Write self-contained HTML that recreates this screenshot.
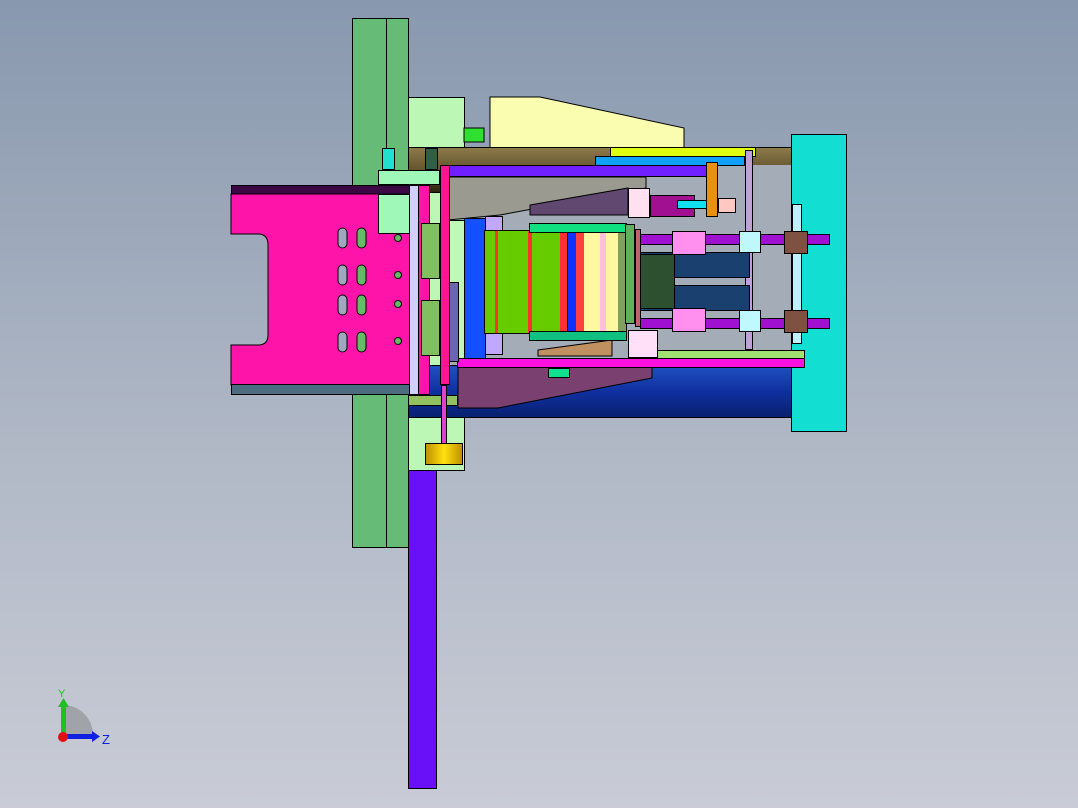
<!DOCTYPE html>
<html><head><style>
*{margin:0;padding:0;box-sizing:border-box}
body{width:1078px;height:808px;overflow:hidden;position:relative;background:linear-gradient(#8898ae,#b0b8c6 55%,#c9ccd6);font-family:"Liberation Sans",sans-serif}
.b{position:absolute;border:1px solid #000}
.n{position:absolute}
</style></head><body>
<!-- green plates -->
<div class="b" style="left:352px;top:18px;width:35px;height:530px;background:#66bb77"></div>
<div class="b" style="left:386px;top:18px;width:23px;height:530px;background:#66bb77"></div>
<!-- light green block -->
<div class="b" style="left:408px;top:97px;width:57px;height:374px;background:#bdf7b5"></div>
<!-- purple column -->
<div class="b" style="left:408px;top:470px;width:29px;height:319px;background:#6a10f8"></div>
<!-- pale yellow top shape -->
<svg class="n" style="left:0;top:0" width="1078" height="808">
<polygon points="490,97 540,97 684,128 684,158 490,158" fill="#fafcb0" stroke="#000"/>
<rect x="464" y="128" width="20" height="14" fill="#30e030" stroke="#000"/>
</svg>
<!-- olive rod -->
<div class="b" style="left:408px;top:147px;width:384px;height:46px;background:linear-gradient(#8c7a4a,#5c4c28 60%,#2c2410)"></div>
<!-- blue rod -->
<div class="b" style="left:408px;top:365px;width:384px;height:53px;background:linear-gradient(#2050c0,#1030a0 50%,#082070)"></div>
<!-- interior gray -->
<div class="n" style="left:440px;top:165px;width:352px;height:200px;background:#a4acb8"></div>
<!-- cyan block -->
<div class="b" style="left:791px;top:134px;width:56px;height:298px;background:#12dfd2"></div>
<div class="b" style="left:792px;top:204px;width:10px;height:140px;background:#c0f0ff"></div>
<!-- top bars -->
<div class="b" style="left:610px;top:147px;width:146px;height:10px;background:#e0ff10"></div>
<div class="b" style="left:595px;top:156px;width:150px;height:10px;background:#10a0f8"></div>
<div class="b" style="left:440px;top:165px;width:270px;height:12px;background:#7020ff"></div>
<div class="b" style="left:706px;top:162px;width:12px;height:55px;background:#e89010"></div>
<!-- gray trapezoid -->
<svg class="n" style="left:0;top:0" width="1078" height="808">
<polygon points="448,177 646,177 646,188 500,215 448,220" fill="#9a9a90" stroke="#000"/>
<polygon points="530,205 628,188 628,215 530,215" fill="#604870" stroke="#000"/>
<polygon points="458,367 652,367 652,378 498,408 458,408" fill="#7a4070" stroke="#000"/>
<polygon points="538,350 612,340 612,356 538,356" fill="#c09060" stroke="#000"/>
</svg>
<!-- left of interior -->
<div class="b" style="left:448px;top:220px;width:17px;height:140px;background:#c0f8b8"></div>
<div class="b" style="left:464px;top:218px;width:22px;height:142px;background:#1450ff"></div>
<div class="b" style="left:485px;top:216px;width:18px;height:22px;background:#c0a8ff"></div>
<div class="b" style="left:485px;top:333px;width:18px;height:22px;background:#c0a8ff"></div>
<!-- green block w/ stripes -->
<div class="b" style="left:484px;top:230px;width:84px;height:104px;background:linear-gradient(90deg,#66cc00 0 10px,#ff3030 10px 13px,#66cc00 13px 43px,#ff3030 43px 47px,#66cc00 47px 75px,#ff3030 75px 84px)"></div>
<div class="b" style="left:567px;top:230px;width:60px;height:104px;background:linear-gradient(90deg,#1030ff 0 8px,#ff4040 8px 16px,#fff8a0 16px 32px,#ffc0e0 32px 38px,#fff8a0 38px 50px,#80a060 50px 60px)"></div>
<div class="b" style="left:529px;top:223px;width:98px;height:10px;background:#10e080"></div>
<div class="b" style="left:529px;top:331px;width:98px;height:10px;background:#10c080"></div>
<div class="b" style="left:625px;top:224px;width:10px;height:100px;background:#60b060"></div>
<div class="b" style="left:635px;top:229px;width:6px;height:98px;background:#c06070"></div>
<!-- bottom bars -->
<div class="b" style="left:655px;top:350px;width:150px;height:9px;background:#a0e070"></div>
<div class="b" style="left:457px;top:358px;width:348px;height:10px;background:#ff10e0"></div>
<div class="b" style="left:548px;top:368px;width:22px;height:10px;background:#10e090"></div>
<!-- rods right -->
<div class="b" style="left:640px;top:234px;width:190px;height:11px;background:#a010d0"></div>
<div class="b" style="left:640px;top:318px;width:190px;height:11px;background:#a010d0"></div>
<div class="b" style="left:745px;top:150px;width:8px;height:200px;background:#c0a0d8"></div>
<div class="b" style="left:640px;top:252px;width:110px;height:26px;background:#1a4070"></div>
<div class="b" style="left:640px;top:285px;width:110px;height:26px;background:#1a4070"></div>
<div class="b" style="left:640px;top:254px;width:35px;height:55px;background:#2c5030"></div>
<div class="b" style="left:672px;top:231px;width:34px;height:24px;background:#ff90f0"></div>
<div class="b" style="left:672px;top:308px;width:34px;height:24px;background:#ff90f0"></div>
<div class="b" style="left:739px;top:231px;width:22px;height:22px;background:#c0f8ff"></div>
<div class="b" style="left:739px;top:310px;width:22px;height:22px;background:#c0f8ff"></div>
<div class="b" style="left:784px;top:231px;width:24px;height:23px;background:#805040"></div>
<div class="b" style="left:784px;top:310px;width:24px;height:23px;background:#805040"></div>
<div class="b" style="left:650px;top:195px;width:45px;height:22px;background:#a01090"></div>
<div class="b" style="left:677px;top:200px;width:30px;height:9px;background:#10e0f0"></div>
<div class="b" style="left:718px;top:198px;width:18px;height:15px;background:#ffc8c0"></div>
<div class="b" style="left:628px;top:188px;width:22px;height:30px;background:#ffe0f0"></div>
<div class="b" style="left:628px;top:330px;width:30px;height:28px;background:#ffe0f8"></div>
<!-- left magenta plate -->
<div class="b" style="left:231px;top:185px;width:180px;height:10px;background:#3c0844"></div>
<svg class="n" style="left:0;top:0" width="1078" height="808">
<path d="M231,194 H410 V385 H231 V345 H258 Q268,345 268,335 V245 Q268,234 258,234 H231 Z" fill="#ff14aa" stroke="#000"/>
<g fill="#a0a8c0" stroke="#000"><rect x="338" y="228" width="9" height="20" rx="4.5"/><rect x="338" y="265" width="9" height="20" rx="4.5"/><rect x="338" y="295" width="9" height="20" rx="4.5"/><rect x="338" y="332" width="9" height="20" rx="4.5"/></g>
<g fill="#66bb66" stroke="#000"><rect x="357" y="228" width="9" height="20" rx="4.5"/><rect x="357" y="265" width="9" height="20" rx="4.5"/><rect x="357" y="295" width="9" height="20" rx="4.5"/><rect x="357" y="332" width="9" height="20" rx="4.5"/></g>
<g fill="#66bb66" stroke="#000"><circle cx="398" cy="238" r="3.5"/><circle cx="398" cy="275" r="3.5"/><circle cx="398" cy="304" r="3.5"/><circle cx="398" cy="341" r="3.5"/></g>
</svg>
<div class="b" style="left:231px;top:384px;width:180px;height:11px;background:#4c6c80"></div>
<div class="b" style="left:378px;top:170px;width:62px;height:15px;background:#a0f8b8"></div>
<div class="b" style="left:378px;top:194px;width:32px;height:40px;background:#a0f8b8"></div>
<div class="b" style="left:409px;top:185px;width:10px;height:210px;background:#d0d0ff"></div>
<div class="b" style="left:418px;top:185px;width:12px;height:210px;background:#ff14aa"></div>
<div class="b" style="left:440px;top:165px;width:10px;height:220px;background:#ff1490"></div>
<div class="b" style="left:421px;top:223px;width:19px;height:56px;background:#80c060"></div>
<div class="b" style="left:421px;top:300px;width:19px;height:56px;background:#80c060"></div>
<div class="b" style="left:449px;top:282px;width:10px;height:80px;background:#6868b0"></div>
<div class="b" style="left:408px;top:395px;width:50px;height:11px;background:#90c060"></div>
<div class="b" style="left:382px;top:148px;width:13px;height:22px;background:#20e0d0"></div>
<div class="b" style="left:425px;top:148px;width:13px;height:22px;background:#306040"></div>
<div class="b" style="left:441px;top:385px;width:6px;height:60px;background:#e040d0"></div>
<div class="b" style="left:425px;top:443px;width:38px;height:22px;background:linear-gradient(90deg,#c09000,#ffe010 50%,#c09000)"></div>
<!-- axis -->
<svg class="n" style="left:50px;top:685px" width="70" height="70">
<path d="M13,20 A30,30 0 0 1 43,50 L13,50 Z" fill="#a0a4a8"/>
<rect x="11" y="20" width="5" height="30" fill="#20c020"/><polygon points="8,22 13.5,13 19,22" fill="#20c020"/>
<rect x="13" y="49" width="30" height="5" fill="#1020e0"/><polygon points="42,46 50,51.5 42,57" fill="#1020e0"/>
<circle cx="13" cy="52" r="5" fill="#e01010"/>
<text x="8" y="12" font-size="11" fill="#20c020">Y</text>
<text x="52" y="59" font-size="13" fill="#1020e0">Z</text>
</svg>
</body></html>
